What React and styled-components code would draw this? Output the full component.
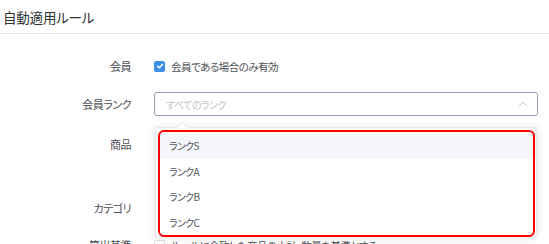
import React from "react";
import styled, { createGlobalStyle } from "styled-components";

const Global = createGlobalStyle`
  html, body { margin: 0; padding: 0; background: #fff; }
  body {
    font-family: "Noto Sans CJK JP", "Noto Sans", sans-serif;
    font-feature-settings: "palt";
    color: #606266;
    overflow: hidden;
  }
`;

const Page = styled.div`
  position: relative;
  width: 549px;
  height: 244px;
  overflow: hidden;
`;

const Header = styled.div`
  height: 33px;
  display: flex;
  align-items: center;
  padding-left: 3px;
  border-bottom: 1px solid #e6e6ef;
`;

const Title = styled.h2`
  margin: 0;
  font-size: 13.5px;
  font-weight: 400;
  color: #303133;
  letter-spacing: -0.2px;
`;

const Form = styled.div`
  display: flex;
  flex-direction: column;
  padding-top: 20px;
`;

const FormItem = styled.div`
  display: flex;
  align-items: flex-start;
  min-height: ${(p) => p.$h || 24}px;
  margin-bottom: ${(p) => (p.$mb ?? 16)}px;
`;

const Label = styled.label`
  width: 154px;
  padding-right: 23px;
  box-sizing: border-box;
  text-align: right;
  font-size: 11px;
  letter-spacing: -0.5px;
  line-height: 24px;
  color: #4a4d52;
  flex-shrink: 0;
`;

const Content = styled.div`
  flex: 1;
  display: flex;
  align-items: center;
  min-height: 24px;
  padding-right: 11px;
`;

const CheckWrap = styled.label`
  display: flex;
  align-items: center;
  gap: 6px;
  font-size: 10.5px;
  letter-spacing: -0.5px;
  color: #505257;
  cursor: pointer;
`;

const Box = styled.span`
  width: 11px;
  height: 11px;
  border-radius: 2px;
  box-sizing: border-box;
  background: ${(p) => (p.$checked ? "#3d8fe3" : "#fff")};
  border: 1px solid ${(p) => (p.$checked ? "#3d8fe3" : "#dcdfe6")};
  display: flex;
  align-items: center;
  justify-content: center;
`;

const Select = styled.div`
  flex: 1;
  height: 24px;
  box-sizing: border-box;
  border: 1px solid #95a1b6;
  border-radius: 3px;
  display: flex;
  align-items: center;
  justify-content: space-between;
  padding: 0 9px 0 11px;
  font-size: 10px;
  letter-spacing: -0.5px;
  color: #c0c4cc;
`;

const Dropdown = styled.div`
  position: absolute;
  left: 155px;
  top: 127px;
  width: 382px;
  height: 110px;
  box-sizing: border-box;
  background: #fff;
  border: 1px solid #e4e7ed;
  border-radius: 3px;
  box-shadow: 0 1px 8px rgba(0, 0, 0, 0.12);
  padding: 5px 0;
`;

const Arrow = styled.div`
  position: absolute;
  left: 22px;
  top: -5px;
  width: 8px;
  height: 8px;
  background: #fff;
  border-left: 1px solid #e4e7ed;
  border-top: 1px solid #e4e7ed;
  transform: rotate(45deg);
`;

const Option = styled.div`
  height: 25.5px;
  display: flex;
  align-items: center;
  padding-left: 13px;
  font-size: 10px;
  letter-spacing: -0.7px;
  color: #55585e;
  background: ${(p) => (p.$hover ? "#f4f6f9" : "transparent")};
`;

const Highlight = styled.div`
  position: absolute;
  left: 158px;
  top: 130px;
  width: 377px;
  height: 107px;
  box-sizing: border-box;
  border: 2px solid #ff0000;
  border-radius: 6px;
  pointer-events: none;
`;

const Check = () => (
  <svg width="8" height="8" viewBox="0 0 8 8">
    <path d="M1.5 4.2 L3.3 5.8 L6.6 2.2" stroke="#fff" strokeWidth="1.4" fill="none" strokeLinecap="round" strokeLinejoin="round" />
  </svg>
);

const Chevron = () => (
  <svg width="10" height="6" viewBox="0 0 10 6">
    <path d="M1 5 L5 1.2 L9 5" stroke="#c0c4cc" strokeWidth="1" fill="none" />
  </svg>
);

export default function App() {
  const ranks = ["ランクS", "ランクA", "ランクB", "ランクC"];
  return (
    <Page>
      <Global />
      <Header>
        <Title>自動適用ルール</Title>
      </Header>
      <Form>
        <FormItem $mb={14}>
          <Label>会員</Label>
          <Content>
            <CheckWrap>
              <Box $checked>
                <Check />
              </Box>
              会員である場合のみ有効
            </CheckWrap>
          </Content>
        </FormItem>
        <FormItem>
          <Label>会員ランク</Label>
          <Content>
            <Select>
              すべてのランク
              <Chevron />
            </Select>
          </Content>
        </FormItem>
        <FormItem $h={48}>
          <Label>商品</Label>
          <Content />
        </FormItem>
        <FormItem $mb={13}>
          <Label>カテゴリ</Label>
          <Content />
        </FormItem>
        <FormItem>
          <Label>算出基準</Label>
          <Content>
            <CheckWrap>
              <Box />
              ルールに合致した商品の小計・数量を基準とする
            </CheckWrap>
          </Content>
        </FormItem>
      </Form>
      <Dropdown>
        <Arrow />
        {ranks.map((r, i) => (
          <Option key={r} $hover={i === 0}>
            {r}
          </Option>
        ))}
      </Dropdown>
      <Highlight />
    </Page>
  );
}
